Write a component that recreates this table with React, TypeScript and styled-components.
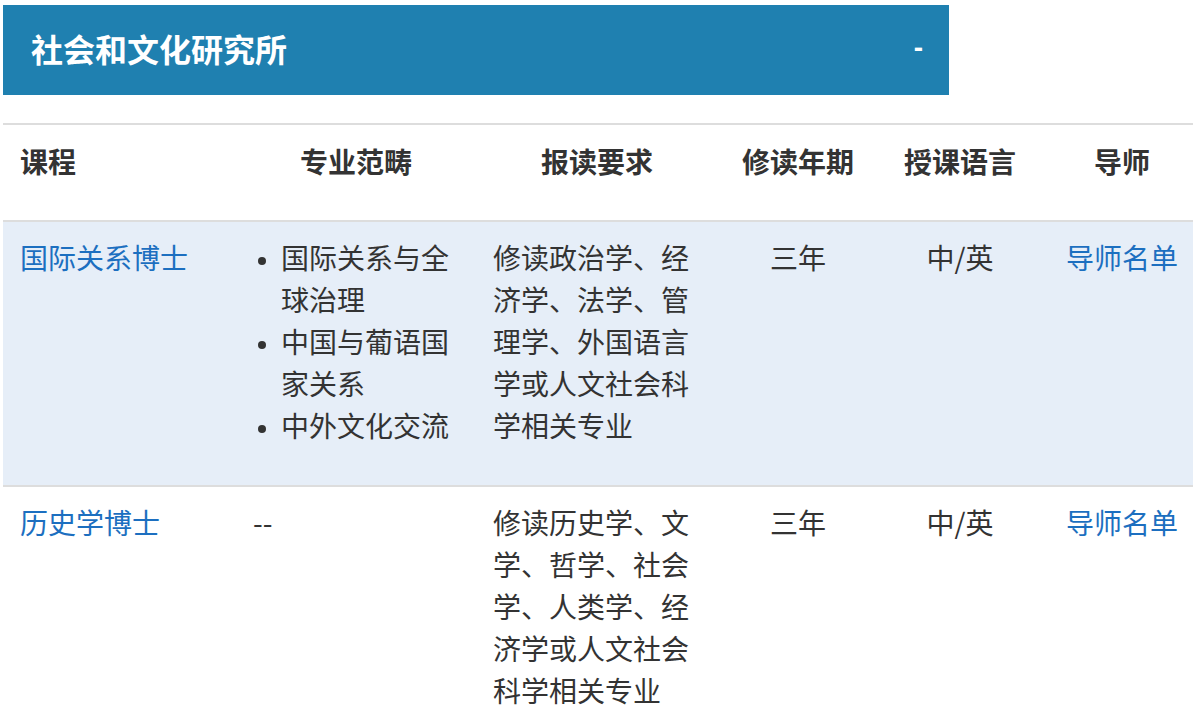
import React from "react";
import styled, { createGlobalStyle } from "styled-components";

const Global = createGlobalStyle`
  html, body { margin: 0; padding: 0; overflow: hidden; background: #fff; }
  body { font-family: "Noto Sans CJK SC", "Noto Sans", sans-serif; color: #333; }
`;

const Page = styled.div`
  padding: 5px 0 0 3px;
  width: 1190px;
  overflow: hidden;
`;

const Bar = styled.div`
  width: 946px;
  height: 90px;
  box-sizing: border-box;
  background: #1f80b0;
  color: #fff;
  display: flex;
  align-items: center;
  justify-content: space-between;
  padding: 0 26px 4px 28px;
`;

const BarTitle = styled.h2`
  margin: 0;
  font-size: 32px;
  font-weight: 700;
  line-height: 1;
`;

const Toggle = styled.span`
  font-family: "Liberation Sans", sans-serif;
  font-size: 28px;
  font-weight: 700;
  line-height: 1;
`;

const Table = styled.table`
  margin-top: 28px;
  width: 1199px;
  table-layout: fixed;
  border-collapse: collapse;
  font-size: 28px;
  line-height: 42px;
  border-top: 2px solid #ddd;
`;

const HeadCell = styled.th<{ $align?: string }>`
  text-align: ${(p) => p.$align || "center"};
  font-weight: 700;
  padding: 15px 17px 38px;
  border-bottom: 2px solid #ddd;
  vertical-align: top;
  color: #333;
`;

const Row = styled.tr<{ $shade?: boolean }>`
  background: ${(p) => (p.$shade ? "#e6eef8" : "#fff")};
  border-bottom: 2px solid #ddd;
`;

const Cell = styled.td<{ $align?: string }>`
  text-align: ${(p) => p.$align || "left"};
  padding: 14px 17px 39px;
  vertical-align: top;
  color: #333;
`;

const Link = styled.a`
  color: #1c6fc0;
  text-decoration: none;
`;

const List = styled.ul`
  margin: 0;
  padding-left: 28px;
  li::marker {
    font-size: 21px;
  }
`;

const widths = [233, 240, 242, 160, 164, 160];

const rows = [
  {
    name: "国际关系博士",
    areas: ["国际关系与全球治理", "中国与葡语国家关系", "中外文化交流"],
    req: "修读政治学、经济学、法学、管理学、外国语言学或人文社会科学相关专业",
    shade: true,
  },
  {
    name: "历史学博士",
    areas: [] as string[],
    req: "修读历史学、文学、哲学、社会学、人类学、经济学或人文社会科学相关专业",
    shade: false,
  },
];

export default function App() {
  return (
    <Page>
      <Global />
      <Bar>
        <BarTitle>社会和文化研究所</BarTitle>
        <Toggle>-</Toggle>
      </Bar>
      <Table>
        <colgroup>
          {widths.map((w, i) => (
            <col key={i} style={{ width: w }} />
          ))}
        </colgroup>
        <thead>
          <tr>
            <HeadCell $align="left">课程</HeadCell>
            <HeadCell>专业范畴</HeadCell>
            <HeadCell>报读要求</HeadCell>
            <HeadCell>修读年期</HeadCell>
            <HeadCell>授课语言</HeadCell>
            <HeadCell>导师</HeadCell>
          </tr>
        </thead>
        <tbody>
          {rows.map((r) => (
            <Row key={r.name} $shade={r.shade}>
              <Cell>
                <Link href="#">{r.name}</Link>
              </Cell>
              <Cell>
                {r.areas.length ? (
                  <List>
                    {r.areas.map((a) => (
                      <li key={a}>{a}</li>
                    ))}
                  </List>
                ) : (
                  "--"
                )}
              </Cell>
              <Cell>{r.req}</Cell>
              <Cell $align="center">三年</Cell>
              <Cell $align="center">中/英</Cell>
              <Cell $align="center">
                <Link href="#">导师名单</Link>
              </Cell>
            </Row>
          ))}
        </tbody>
      </Table>
    </Page>
  );
}
